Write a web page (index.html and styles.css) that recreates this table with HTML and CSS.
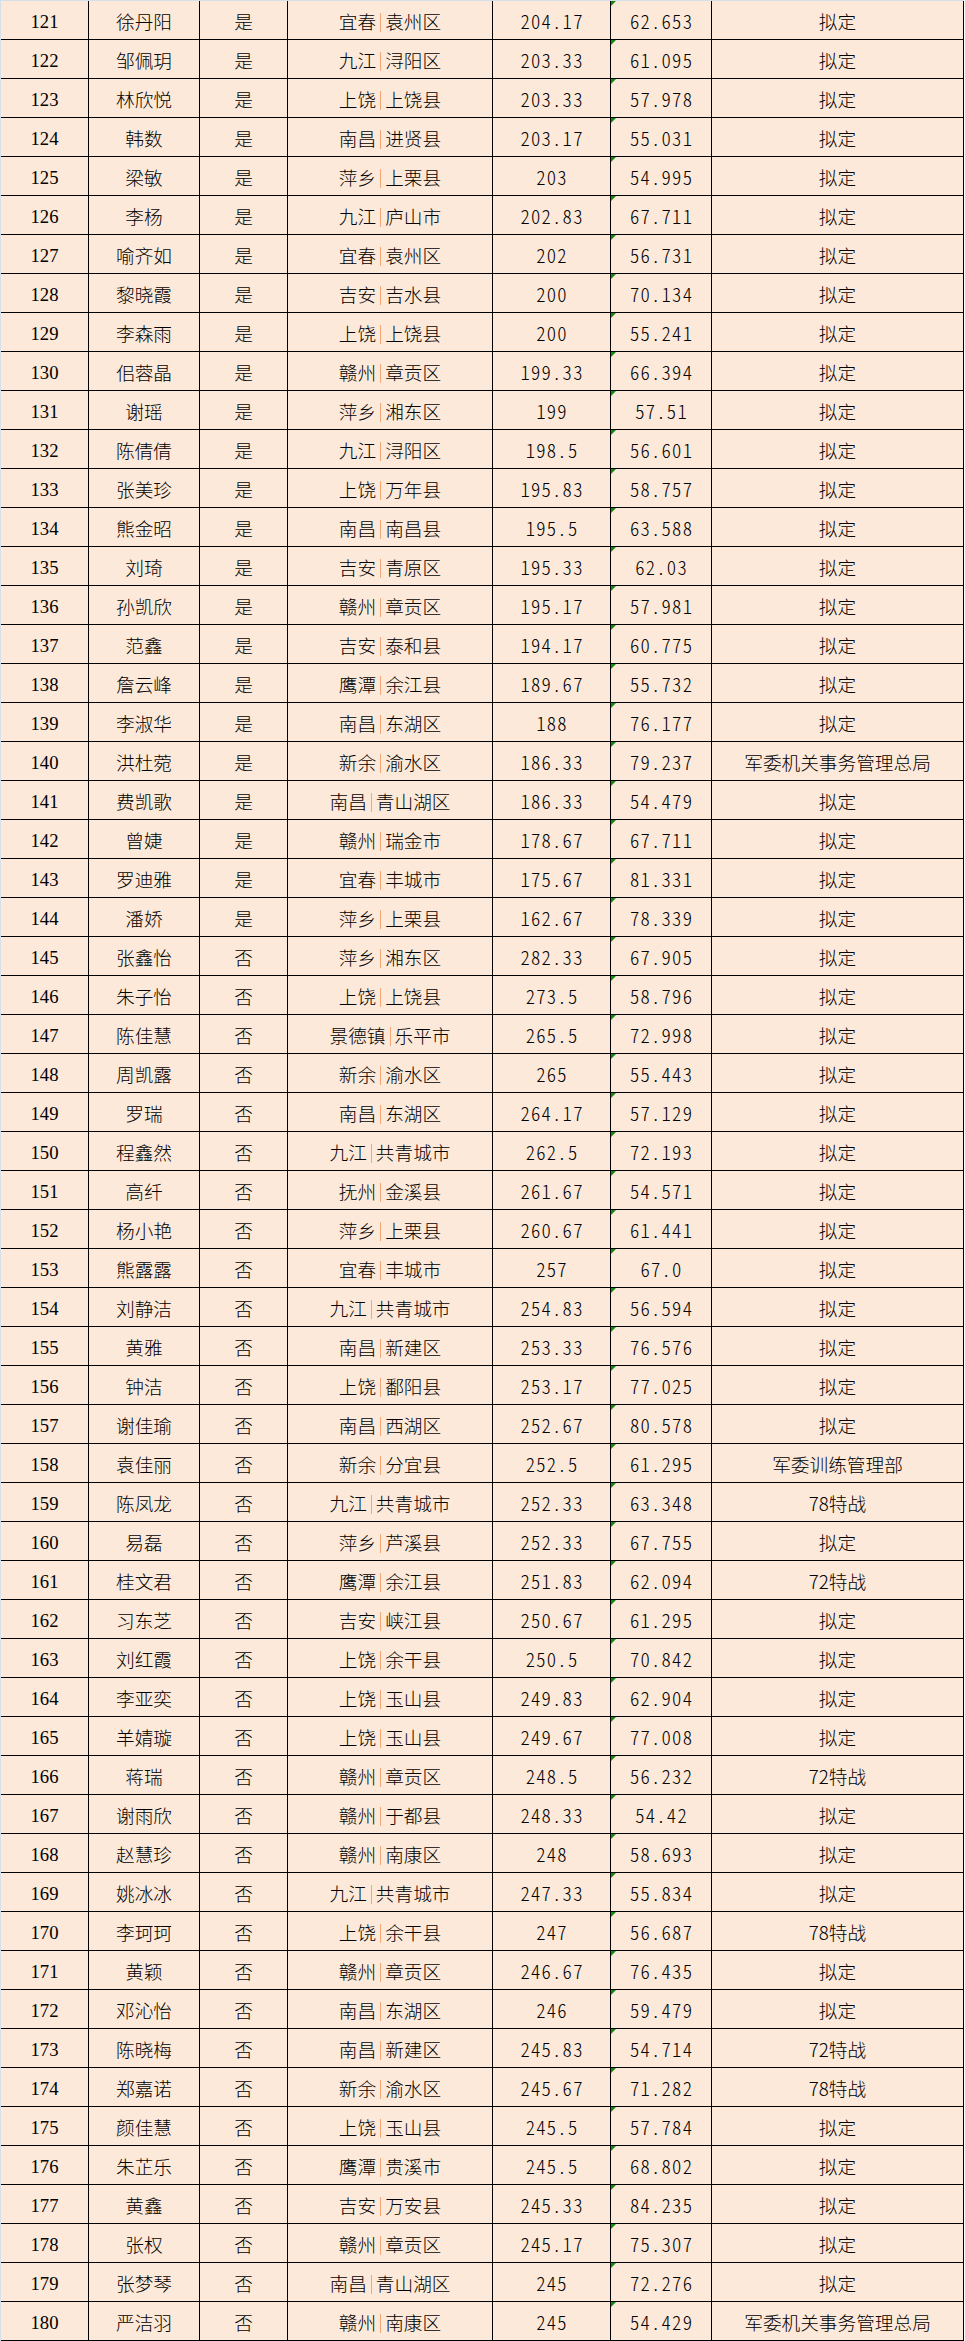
FILE: index.html
```html
<!DOCTYPE html>
<html lang="zh-CN">
<head>
<meta charset="utf-8">
<title>名单</title>
<link rel="stylesheet" href="styles.css">
</head>
<body>
<div class="sheet" id="sheet"></div>
<script src="app.js"></script>
</body>
</html>
```

FILE: app.js
```js
const rows = [
["121","徐丹阳","是","宜春","袁州区","204.17","62.653","拟定"],
["122","邹佩玥","是","九江","浔阳区","203.33","61.095","拟定"],
["123","林欣悦","是","上饶","上饶县","203.33","57.978","拟定"],
["124","韩数","是","南昌","进贤县","203.17","55.031","拟定"],
["125","梁敏","是","萍乡","上栗县","203","54.995","拟定"],
["126","李杨","是","九江","庐山市","202.83","67.711","拟定"],
["127","喻齐如","是","宜春","袁州区","202","56.731","拟定"],
["128","黎晓霞","是","吉安","吉水县","200","70.134","拟定"],
["129","李森雨","是","上饶","上饶县","200","55.241","拟定"],
["130","佀蓉晶","是","赣州","章贡区","199.33","66.394","拟定"],
["131","谢瑶","是","萍乡","湘东区","199","57.51","拟定"],
["132","陈倩倩","是","九江","浔阳区","198.5","56.601","拟定"],
["133","张美珍","是","上饶","万年县","195.83","58.757","拟定"],
["134","熊金昭","是","南昌","南昌县","195.5","63.588","拟定"],
["135","刘琦","是","吉安","青原区","195.33","62.03","拟定"],
["136","孙凯欣","是","赣州","章贡区","195.17","57.981","拟定"],
["137","范鑫","是","吉安","泰和县","194.17","60.775","拟定"],
["138","詹云峰","是","鹰潭","余江县","189.67","55.732","拟定"],
["139","李淑华","是","南昌","东湖区","188","76.177","拟定"],
["140","洪杜菀","是","新余","渝水区","186.33","79.237","军委机关事务管理总局"],
["141","费凯歌","是","南昌","青山湖区","186.33","54.479","拟定"],
["142","曾婕","是","赣州","瑞金市","178.67","67.711","拟定"],
["143","罗迪雅","是","宜春","丰城市","175.67","81.331","拟定"],
["144","潘娇","是","萍乡","上栗县","162.67","78.339","拟定"],
["145","张鑫怡","否","萍乡","湘东区","282.33","67.905","拟定"],
["146","朱子怡","否","上饶","上饶县","273.5","58.796","拟定"],
["147","陈佳慧","否","景德镇","乐平市","265.5","72.998","拟定"],
["148","周凯露","否","新余","渝水区","265","55.443","拟定"],
["149","罗瑞","否","南昌","东湖区","264.17","57.129","拟定"],
["150","程鑫然","否","九江","共青城市","262.5","72.193","拟定"],
["151","高纤","否","抚州","金溪县","261.67","54.571","拟定"],
["152","杨小艳","否","萍乡","上栗县","260.67","61.441","拟定"],
["153","熊露露","否","宜春","丰城市","257","67.0","拟定"],
["154","刘静洁","否","九江","共青城市","254.83","56.594","拟定"],
["155","黄雅","否","南昌","新建区","253.33","76.576","拟定"],
["156","钟洁","否","上饶","鄱阳县","253.17","77.025","拟定"],
["157","谢佳瑜","否","南昌","西湖区","252.67","80.578","拟定"],
["158","袁佳丽","否","新余","分宜县","252.5","61.295","军委训练管理部"],
["159","陈凤龙","否","九江","共青城市","252.33","63.348","78特战"],
["160","易磊","否","萍乡","芦溪县","252.33","67.755","拟定"],
["161","桂文君","否","鹰潭","余江县","251.83","62.094","72特战"],
["162","习东芝","否","吉安","峡江县","250.67","61.295","拟定"],
["163","刘红霞","否","上饶","余干县","250.5","70.842","拟定"],
["164","李亚奕","否","上饶","玉山县","249.83","62.904","拟定"],
["165","羊婧璇","否","上饶","玉山县","249.67","77.008","拟定"],
["166","蒋瑞","否","赣州","章贡区","248.5","56.232","72特战"],
["167","谢雨欣","否","赣州","于都县","248.33","54.42","拟定"],
["168","赵慧珍","否","赣州","南康区","248","58.693","拟定"],
["169","姚冰冰","否","九江","共青城市","247.33","55.834","拟定"],
["170","李珂珂","否","上饶","余干县","247","56.687","78特战"],
["171","黄颖","否","赣州","章贡区","246.67","76.435","拟定"],
["172","邓沁怡","否","南昌","东湖区","246","59.479","拟定"],
["173","陈晓梅","否","南昌","新建区","245.83","54.714","72特战"],
["174","郑嘉诺","否","新余","渝水区","245.67","71.282","78特战"],
["175","颜佳慧","否","上饶","玉山县","245.5","57.784","拟定"],
["176","朱芷乐","否","鹰潭","贵溪市","245.5","68.802","拟定"],
["177","黄鑫","否","吉安","万安县","245.33","84.235","拟定"],
["178","张权","否","赣州","章贡区","245.17","75.307","拟定"],
["179","张梦琴","否","南昌","青山湖区","245","72.276","拟定"],
["180","严洁羽","否","赣州","南康区","245","54.429","军委机关事务管理总局"]
];
const sheet = document.getElementById("sheet");
const html = rows.map(r =>
  `<div class="row">` +
  `<div class="c c-no">${r[0]}</div>` +
  `<div class="c">${r[1]}</div>` +
  `<div class="c">${r[2]}</div>` +
  `<div class="c">${r[3]}<span class="sep"></span>${r[4]}</div>` +
  `<div class="c c-num">${r[5]}</div>` +
  `<div class="c c-num c-flag">${r[6]}</div>` +
  `<div class="c">${r[7]}</div>` +
  `</div>`
).join("");
sheet.innerHTML = html;
```

FILE: styles.css
```css
html, body {
  margin: 0;
  padding: 0;
  background: #ffffff;
}
.sheet {
  width: 963px;
  border-top: 1px solid #d3dfeb;
  border-left: 1px solid #d3dfeb;
  background: #fde9d9;
  font-family: "Noto Sans CJK SC", sans-serif;
  font-size: 18.67px;
  font-weight: 300;
  color: #000;
}
.row {
  display: grid;
  grid-template-columns: 88px 111px 88px 205px 118px 101px 252px;
}
.c {
  box-sizing: border-box;
  height: 39px;
  border-right: 1px solid #000;
  border-bottom: 1px solid #000;
  padding-top: 8px;
  line-height: 24px;
  text-align: center;
  white-space: nowrap;
  position: relative;
}
.c-no {
  font-family: "Liberation Serif", serif;
  font-weight: 400;
  padding-top: 9px;
}
.c-num {
  font-feature-settings: "hwid" 1;
  letter-spacing: 1.2px;
  text-indent: 1.2px;
}
.c-flag::before {
  content: "";
  position: absolute;
  left: 0;
  top: 0;
  border-top: 5px solid #108a10;
  border-right: 5px solid transparent;
}
.sep {
  display: inline-block;
  width: 1px;
  height: 19px;
  background: #f2a774;
  margin: 0 4px;
  vertical-align: -3px;
}
```
